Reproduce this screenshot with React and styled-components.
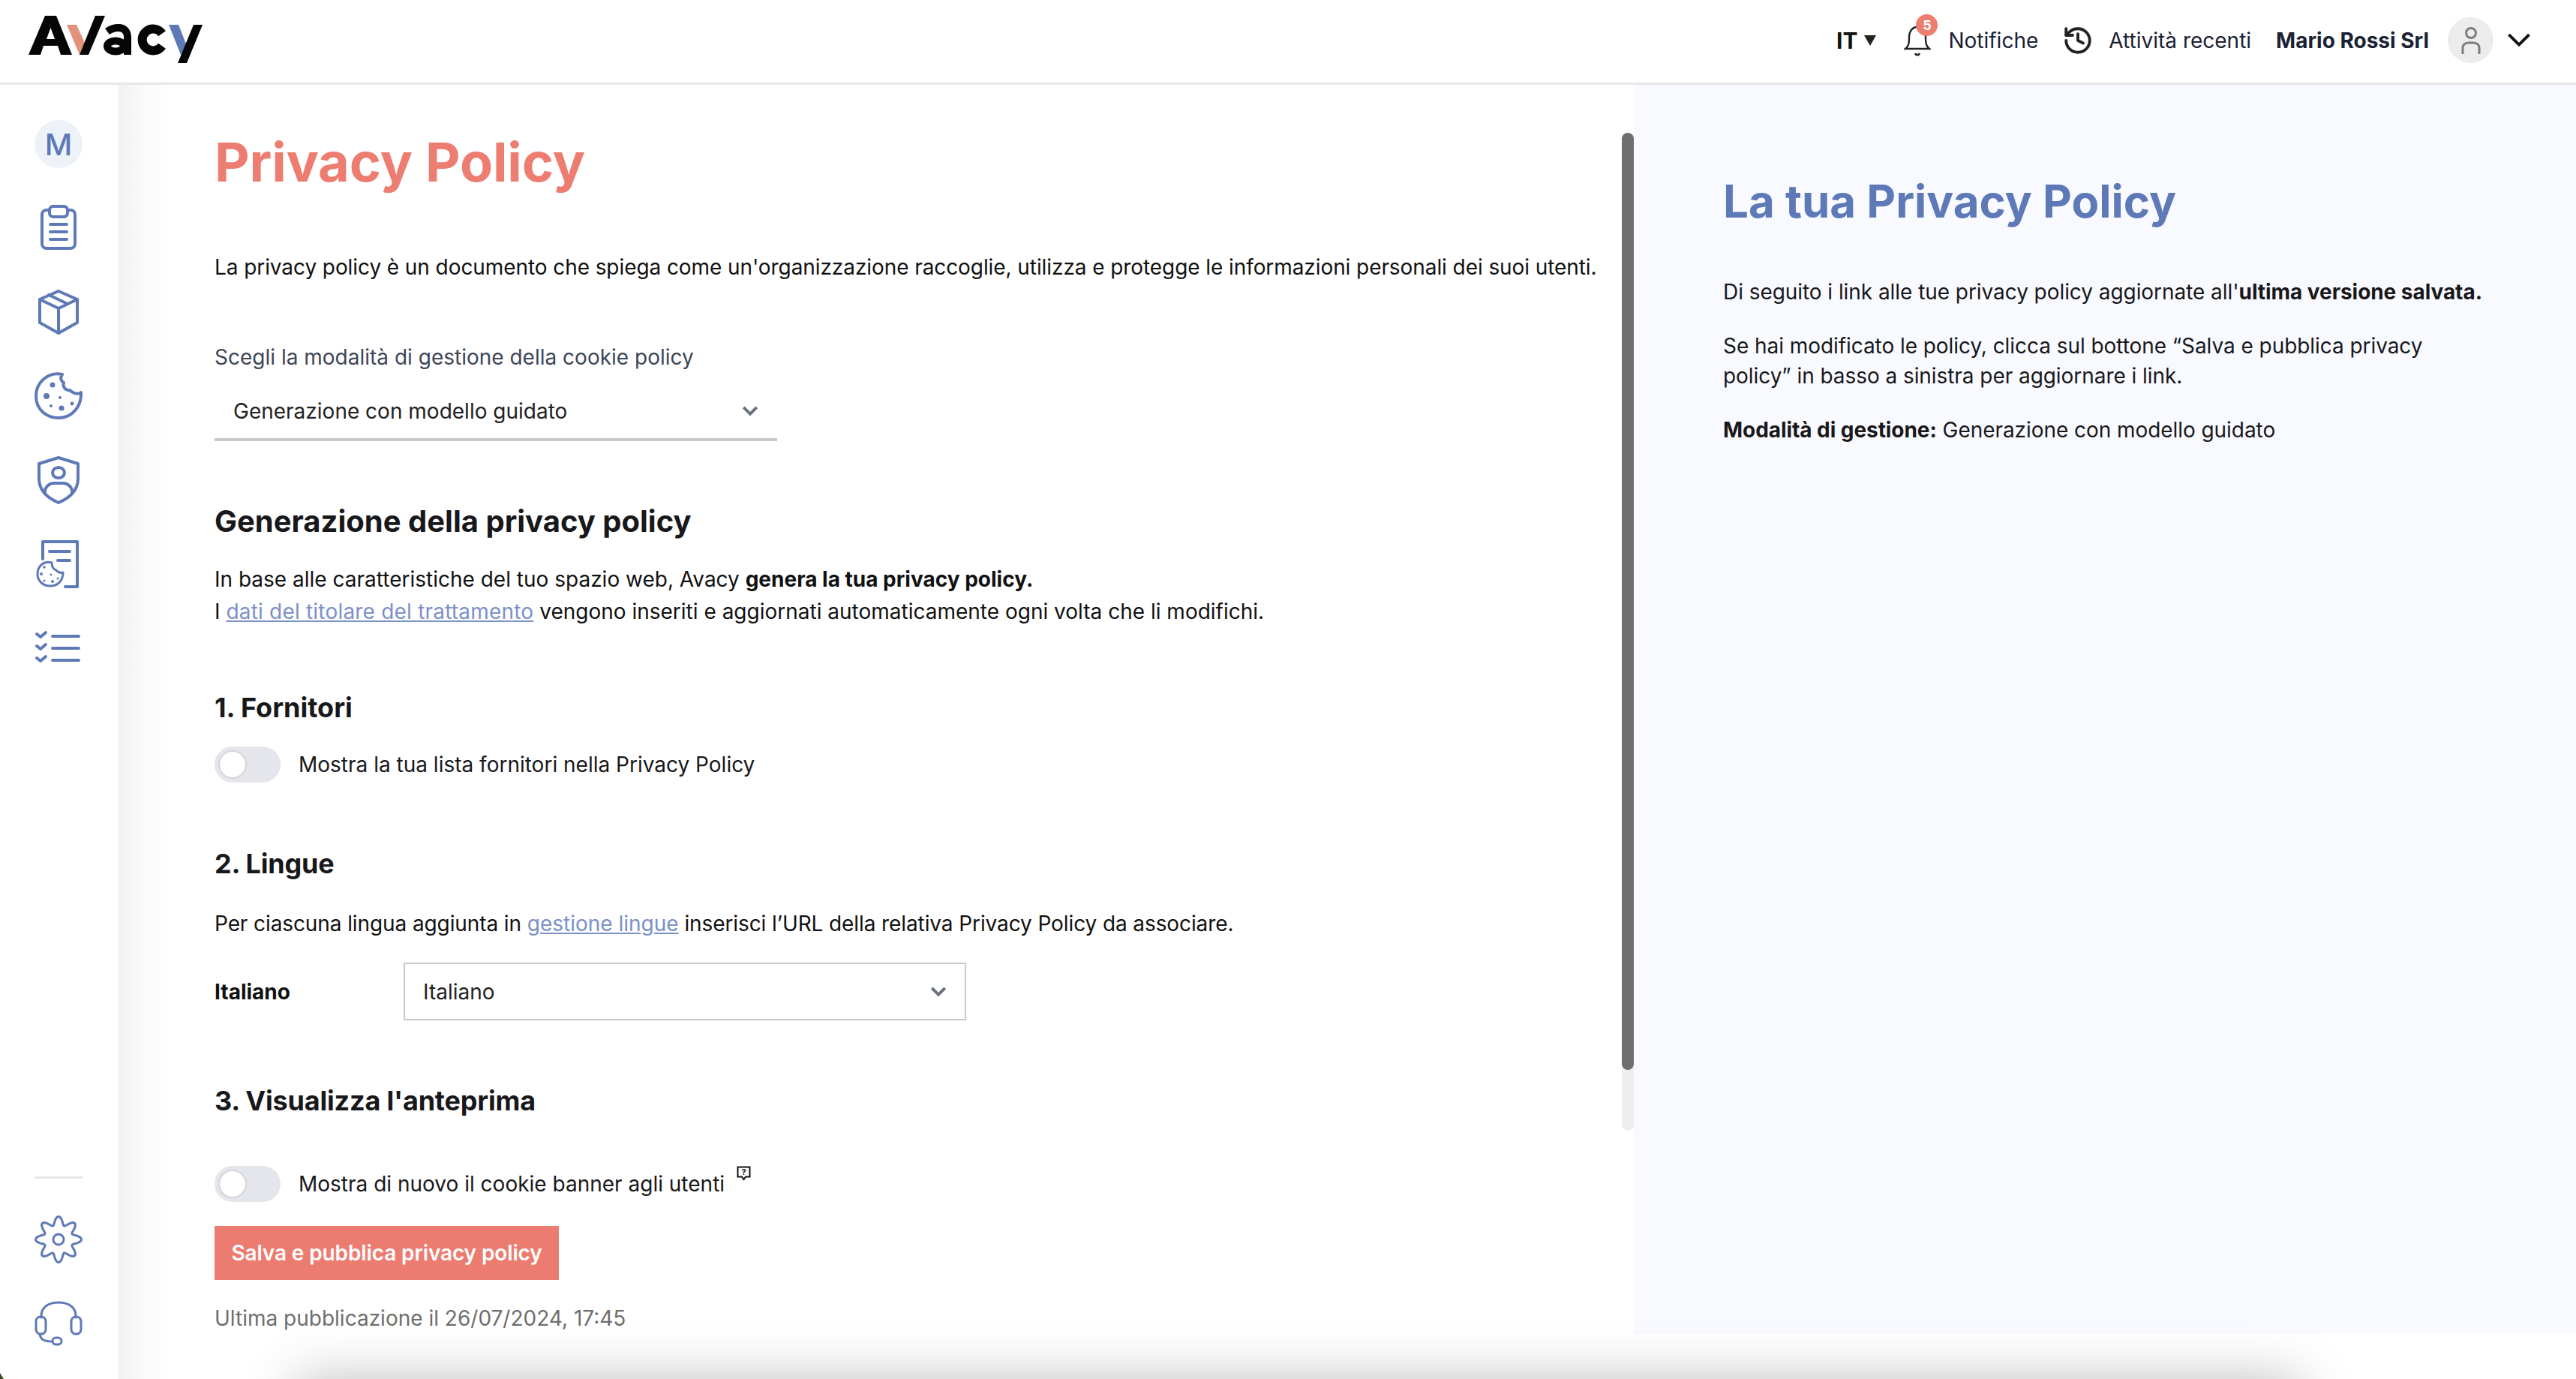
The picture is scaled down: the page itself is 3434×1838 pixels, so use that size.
import React from "react";
import styled, { createGlobalStyle } from "styled-components";
import { History } from "lucide-react";

const GlobalStyle = createGlobalStyle`
  html, body { margin: 0; padding: 0; background: #fff; }
  body { font-family: Inter, "Liberation Sans", sans-serif; color: #18181b; overflow: hidden; }
  * { box-sizing: border-box; }
`;

const Page = styled.div`
  width: 3434px;
  height: 1838px;
  position: relative;
  overflow: hidden;
  display: flex;
  flex-direction: column;
`;

const TopBar = styled.header`
  height: 113px;
  flex: none;
  display: flex;
  align-items: center;
  justify-content: space-between;
  padding: 0 59px 3px 38px;
  border-bottom: 3px solid #e6e6ec;
  background: #fff;
`;

const LogoSvg = styled.svg`
  display: block;
  margin-top: 3px;
`;

const TopActions = styled.div`
  display: flex;
  align-items: center;
  font-size: 28px;
  color: #1a2233;
`;

const Lang = styled.div`
  display: flex;
  align-items: center;
  gap: 9px;
  font-weight: 700;
  font-size: 30px;
  color: #111;
  margin-right: 37px;
`;

const LangArrow = styled.span`
  width: 0;
  height: 0;
  border-left: 8px solid transparent;
  border-right: 8px solid transparent;
  border-top: 14px solid #222;
`;

const BellWrap = styled.div`
  position: relative;
  width: 36px;
  height: 40px;
  margin-right: 23px;
  display: flex;
`;

const Badge = styled.span`
  position: absolute;
  top: -15px;
  left: 16px;
  width: 29px;
  height: 29px;
  border-radius: 50%;
  background: #ee7d71;
  color: #fff;
  font-size: 18px;
  font-weight: 700;
  display: flex;
  align-items: center;
  justify-content: center;
`;

const TopLabel = styled.span`
  white-space: nowrap;
  font-weight: ${(p) => (p.$strong ? 700 : 400)};
  margin-right: ${(p) => p.$gap}px;
`;

const HistoryIcon = styled(History)`
  margin-right: 20px;
  color: #222;
`;

const Avatar = styled.div`
  width: 61px;
  height: 61px;
  border-radius: 50%;
  background: #ececec;
  display: flex;
  align-items: center;
  justify-content: center;
  margin-right: 17px;
`;

const Body = styled.div`
  flex: 1;
  min-height: 0;
  display: flex;
`;

const SideNav = styled.nav`
  width: 158px;
  flex: none;
  background: #fff;
  display: flex;
  flex-direction: column;
  align-items: center;
  padding: 23px 2px 18px 0;
  position: relative;
  z-index: 2;
`;

const NavItem = styled.div`
  height: 112px;
  width: 100%;
  flex: none;
  display: flex;
  align-items: center;
  justify-content: center;
`;

const Initial = styled.div`
  width: 64px;
  height: 64px;
  border-radius: 50%;
  background: #edf2f9;
  color: #5e79b7;
  font-size: 40px;
  font-weight: 500;
  display: flex;
  align-items: center;
  justify-content: center;
`;

const NavSpacer = styled.div`
  flex: 1;
`;

const NavDivider = styled.div`
  width: 64px;
  height: 3px;
  background: #e6e6ec;
  margin-bottom: 25px;
`;

const NavIconSvg = styled.svg`
  display: block;
  fill: none;
  stroke: #5e79b7;
  stroke-width: ${(p) => p.$stroke}px;
  stroke-linecap: round;
  stroke-linejoin: round;
`;

const Dot = styled.circle`
  fill: #5e79b7;
  stroke: none;
`;

const MainPane = styled.main`
  width: 2020px;
  flex: none;
  padding: 61px 0 0 128px;
  position: relative;
  background: linear-gradient(90deg, #f1f1f1 0, #fbfbfb 36px, #fff 70px);
`;

const PageTitle = styled.h1`
  margin: 0;
  font-size: 72px;
  line-height: 84px;
  font-weight: 700;
  color: #ee7d71;
  letter-spacing: -0.1px;
`;

const Text = styled.p`
  margin: ${(p) => p.$top || 0}px 0 0;
  font-size: 28px;
  line-height: 43px;
  color: #111;
  white-space: nowrap;
  letter-spacing: ${(p) => p.$track || 0}px;
`;

const FieldLabel = styled.div`
  margin-top: 78px;
  font-size: 28px;
  line-height: 40px;
  color: #3e4657;
`;

const UnderlineSelect = styled.div`
  width: 750px;
  height: 74px;
  margin-top: 18px;
  padding: 0 25px 2px;
  border-bottom: 4px solid #c8c8c8;
  display: flex;
  align-items: center;
  justify-content: space-between;
  font-size: 28px;
  color: #222;
`;

const SectionTitle = styled.h2`
  margin: ${(p) => p.$top}px 0 0;
  font-size: ${(p) => p.$size || 40}px;
  line-height: 48px;
  font-weight: 700;
  color: #18181b;
  letter-spacing: ${(p) => p.$track || 0}px;
`;

const StyledLink = styled.a`
  color: #7c90c9;
  text-decoration: underline;
  letter-spacing: ${(p) => p.$track || 0}px;
`;

const ToggleRow = styled.div`
  margin-top: ${(p) => p.$top}px;
  display: flex;
  align-items: center;
  gap: 24px;
  height: 48px;
  font-size: 28px;
  color: #18181b;
`;

const ToggleTrack = styled.div`
  width: 88px;
  height: 48px;
  border-radius: 24px;
  background: #e4e6eb;
  padding: 5px;
`;

const ToggleKnob = styled.div`
  width: 38px;
  height: 38px;
  border-radius: 50%;
  background: #fff;
  border: 2px solid #d3d5da;
`;

const HelpIcon = styled.svg`
  display: block;
  margin: -28px 0 0 -8px;
`;

const LangRow = styled.div`
  margin-top: 30px;
  display: flex;
  align-items: center;
`;

const LangName = styled.div`
  width: 252px;
  font-size: 28px;
  font-weight: 700;
  color: #111;
`;

const BoxSelect = styled.div`
  width: 750px;
  height: 77px;
  border: 2px solid #c8c8c8;
  padding: 0 24px;
  display: flex;
  align-items: center;
  justify-content: space-between;
  font-size: 28px;
  color: #222;
`;

const SaveButton = styled.button`
  display: block;
  margin-top: 32px;
  width: 459px;
  height: 72px;
  border: 0;
  padding: 0;
  background: #ec7c70;
  color: #fff;
  font-family: inherit;
  font-size: 28px;
  font-weight: 600;
  letter-spacing: -0.12px;
`;

const PublishedNote = styled.div`
  margin-top: 31px;
  font-size: 28px;
  line-height: 40px;
  color: #6e6e6e;
`;

const ScrollTrack = styled.div`
  position: absolute;
  top: 64px;
  right: 0;
  width: 16px;
  height: 1330px;
  border-radius: 8px;
  background: #eeeeee;
`;

const ScrollThumb = styled.div`
  width: 16px;
  height: 1249px;
  border-radius: 8px;
  background: #6f6f6f;
`;

const InfoPane = styled.aside`
  flex: 1;
  height: 1665px;
  background: #f9faff;
  padding: 119px 0 0 119px;
`;

const InfoTitle = styled.h2`
  margin: 0 0 65px;
  font-size: 60px;
  line-height: 72px;
  font-weight: 700;
  color: #5e79b7;
`;

const InfoText = styled.p`
  margin: 0 0 32px;
  font-size: 28px;
  line-height: 40px;
  color: #18181b;
  letter-spacing: -0.06px;
`;

const FloatingShadow = styled.div`
  position: absolute;
  left: 395px;
  width: 2670px;
  top: 1838px;
  height: 100px;
  box-shadow: 0 0 70px rgba(0, 0, 0, 0.25);
  z-index: 1;
`;

const CornerSpeck = styled.div`
  position: absolute;
  left: 0;
  bottom: 0;
  width: 0;
  height: 0;
  border-top: 8px solid transparent;
  border-left: 5px solid #3c4a20;
  z-index: 3;
`;

const Chevron = ({ size = 22, color = "#6b7280", weight = 4 }) => (
  <svg width={size} height={size * 0.62} viewBox="0 0 22 14" fill="none">
    <path d="M2 2 L11 11 L20 2" stroke={color} strokeWidth={weight} />
  </svg>
);

const NavIcon = ({ stroke = 4, children }) => (
  <NavIconSvg $stroke={stroke} width="64" height="64" viewBox="0 0 64 64">
    {children}
  </NavIconSvg>
);

function gearPath() {
  const pts = [];
  for (let i = 0; i <= 240; i++) {
    const t = (i / 240) * Math.PI * 2;
    const r = 25 + 5.5 * Math.cos(8 * t);
    pts.push(`${(32 + r * Math.sin(t)).toFixed(2)} ${(32 - r * Math.cos(t)).toFixed(2)}`);
  }
  return "M" + pts.join(" L") + "Z";
}

const Logo = () => (
  <LogoSvg width="240" height="72" viewBox="38 20 240 72">
    <path d="M38 74 L60 22 H75 L96 74 H81 L77 62 H58 L54 74 Z M62 53 H73 L67.5 38 Z" fill="#050505" />
    <path d="M89 34 H102 L113 58 L106 74 Z" fill="#e1937b" />
    <path d="M106 74 L127 22 H140 L118 74 Z" fill="#050505" />
    <path d="M143 43 C150 38 155 38 158 38 C166 38 170 43 170 51 V74" fill="none" stroke="#050505" strokeWidth="10" />
    <ellipse cx="154" cy="62.5" rx="11" ry="7" fill="none" stroke="#050505" strokeWidth="10" />
    <path d="M216 45.7 A14.5 14.5 0 1 0 216 62.3" fill="none" stroke="#050505" strokeWidth="12" />
    <path d="M225 34 H238 L249 62 L241 74 Z" fill="#5e79b7" />
    <path d="M258 34 H270 L249 85 H237 Z" fill="#050505" />
  </LogoSvg>
);

export default function App() {
  return (
    <Page>
      <GlobalStyle />
      <TopBar>
        <Logo />
        <TopActions>
          <Lang>IT<LangArrow /></Lang>
          <BellWrap>
            <svg width="36" height="42" viewBox="0 0 36 42" fill="none" stroke="#222" strokeWidth="2.4">
              <path d="M2 31 C7 27 7 22 7 16 C7 8 11 2 18 2 C25 2 29 8 29 16 C29 22 29 27 34 31 Z" />
              <path d="M15 37 C16 40 20 40 21 37" />
            </svg>
            <Badge>5</Badge>
          </BellWrap>
          <TopLabel $gap={32}>Notifiche</TopLabel>
          <HistoryIcon size={42} strokeWidth={2.2} />
          <TopLabel $gap={33}>Attività recenti</TopLabel>
          <TopLabel $strong $gap={25}>Mario Rossi Srl</TopLabel>
          <Avatar>
            <svg width="30" height="40" viewBox="0 0 30 40" fill="none" stroke="#7d7d7d" strokeWidth="3">
              <circle cx="15" cy="10" r="6.5" />
              <path d="M4 38 V30 C4 25 8 23 12 23 H18 C22 23 26 25 26 30 V38" />
            </svg>
          </Avatar>
          <Chevron size={34} color="#111" weight={2.6} />
        </TopActions>
      </TopBar>
      <Body>
        <SideNav>
          <NavItem><Initial>M</Initial></NavItem>
          <NavItem>
            <NavIcon>
              <rect x="10" y="8" width="44" height="51" rx="6" />
              <rect x="20" y="3" width="24" height="14" rx="5" fill="#fff" />
              <path d="M21 27 H43 M21 37 H43 M21 47 H43" />
            </NavIcon>
          </NavItem>
          <NavItem>
            <NavIcon>
              <path d="M32 4 L57 15 V46 L32 60 L7 46 V15 Z" />
              <path d="M7 15 L32 27 L57 15 M32 27 V60 M19 9 L44 21" />
            </NavIcon>
          </NavItem>
          <NavItem>
            <NavIcon>
              <path d="M37 3 C20 -1 2 12 2 32 C2 50 16 61 32 61 C50 61 63 46 62 27 C57 31 50 27 47 24 C42 25 37 20 39 14 C35 12 34 7 37 3 Z" />
              <Dot cx="24" cy="17" r="3.5" />
              <Dot cx="16" cy="32" r="4" />
              <Dot cx="34" cy="34" r="2" />
              <Dot cx="22" cy="45" r="2" />
              <Dot cx="36" cy="48" r="3.6" />
              <Dot cx="50" cy="42" r="2.4" />
            </NavIcon>
          </NavItem>
          <NavItem>
            <NavIcon>
              <path d="M32 2 L58 10 V30 C58 46 46 56 32 62 C18 56 6 46 6 30 V10 Z" />
              <ellipse cx="32" cy="22" rx="8" ry="7" />
              <path d="M14 49 C13 41 20 36 26 36 H38 C44 36 51 41 50 49" />
            </NavIcon>
          </NavItem>
          <NavItem>
            <NavIcon>
              <path d="M11 25 V2 H57 V62 H41 M20 15 H47 M31 27 H47" />
              <path strokeWidth="3" d="M23 30 C12 27 4 35 4 45 C4 55 12 61 21 61 C31 61 38 54 38 43 C34 44 31 43 29 40 C26 39 23 36 23 30 Z" />
              <Dot cx="13" cy="36" r="1.8" />
              <Dot cx="9" cy="45" r="2" />
              <Dot cx="22" cy="46" r="1.4" />
              <Dot cx="13" cy="54" r="1.5" />
              <Dot cx="24" cy="55" r="2" />
              <Dot cx="31" cy="51" r="1.5" />
            </NavIcon>
          </NavItem>
          <NavItem>
            <NavIcon>
              <path d="M24 16 H59 M24 32 H59 M24 48 H59" />
              <path d="M3 13 L8 17 L15 11 M3 29 L8 33 L15 27 M3 45 L8 49 L15 43" />
            </NavIcon>
          </NavItem>
          <NavSpacer />
          <NavDivider />
          <NavItem>
            <NavIcon stroke={3}>
              <path d={gearPath()} />
              <circle cx="32" cy="32" r="7" />
            </NavIcon>
          </NavItem>
          <NavItem>
            <NavIcon stroke={3}>
              <path d="M9 24 V22 C9 10 19 4 32 4 C45 4 55 10 55 22 V24" />
              <rect x="2" y="23" width="13" height="23" rx="6" />
              <rect x="49" y="23" width="13" height="23" rx="6" />
              <path d="M7 46 C8 54 14 56 24 56" />
              <rect x="24" y="51" width="12" height="9" rx="4.5" />
            </NavIcon>
          </NavItem>
        </SideNav>

        <MainPane>
          <PageTitle>Privacy Policy</PageTitle>
          <Text $top={77} $track={-0.08}>La privacy policy è un documento che spiega come un'organizzazione raccoglie, utilizza e protegge le informazioni personali dei suoi utenti.</Text>
          <FieldLabel>Scegli la modalità di gestione della cookie policy</FieldLabel>
          <UnderlineSelect>
            Generazione con modello guidato
            <Chevron />
          </UnderlineSelect>
          <SectionTitle $top={83}>Generazione della privacy policy</SectionTitle>
          <Text $top={32}>In base alle caratteristiche del tuo spazio web, Avacy <b>genera la tua privacy policy.</b></Text>
          <Text>I <StyledLink $track={0.2}>dati del titolare del trattamento</StyledLink> vengono inseriti e aggiornati automaticamente ogni volta che li modifichi.</Text>
          <SectionTitle $top={82} $size={36}>1. Fornitori</SectionTitle>
          <ToggleRow $top={28}>
            <ToggleTrack><ToggleKnob /></ToggleTrack>
            Mostra la tua lista fornitori nella Privacy Policy
          </ToggleRow>
          <SectionTitle $top={84} $size={36} $track={-0.2}>2. Lingue</SectionTitle>
          <Text $top={35} $track={-0.1}>Per ciascuna lingua aggiunta in <StyledLink>gestione lingue</StyledLink> inserisci l’URL della relativa Privacy Policy da associare.</Text>
          <LangRow>
            <LangName>Italiano</LangName>
            <BoxSelect>
              Italiano
              <Chevron />
            </BoxSelect>
          </LangRow>
          <SectionTitle $top={83} $size={36} $track={-0.2}>3. Visualizza l'anteprima</SectionTitle>
          <ToggleRow $top={63}>
            <ToggleTrack><ToggleKnob /></ToggleTrack>
            Mostra di nuovo il cookie banner agli utenti
            <HelpIcon width="19" height="20" viewBox="0 0 19 20">
              <path d="M1.5 1.5 H17.5 V14.5 H12 L9.5 18 L7 14.5 H1.5 Z" fill="#fff" stroke="#111" strokeWidth="2" />
              <text x="9.5" y="12" fontSize="11" fontWeight="700" textAnchor="middle" fill="#111">?</text>
            </HelpIcon>
          </ToggleRow>
          <SaveButton>Salva e pubblica privacy policy</SaveButton>
          <PublishedNote>Ultima pubblicazione il 26/07/2024, 17:45</PublishedNote>
          <ScrollTrack><ScrollThumb /></ScrollTrack>
        </MainPane>

        <InfoPane>
          <InfoTitle>La tua Privacy Policy</InfoTitle>
          <InfoText>Di seguito i link alle tue privacy policy aggiornate all'<b>ultima versione salvata.</b></InfoText>
          <InfoText>Se hai modificato le policy, clicca sul bottone “Salva e pubblica privacy<br />policy” in basso a sinistra per aggiornare i link.</InfoText>
          <InfoText><b>Modalità di gestione:</b> Generazione con modello guidato</InfoText>
        </InfoPane>
      </Body>
      <FloatingShadow />
      <CornerSpeck />
    </Page>
  );
}
